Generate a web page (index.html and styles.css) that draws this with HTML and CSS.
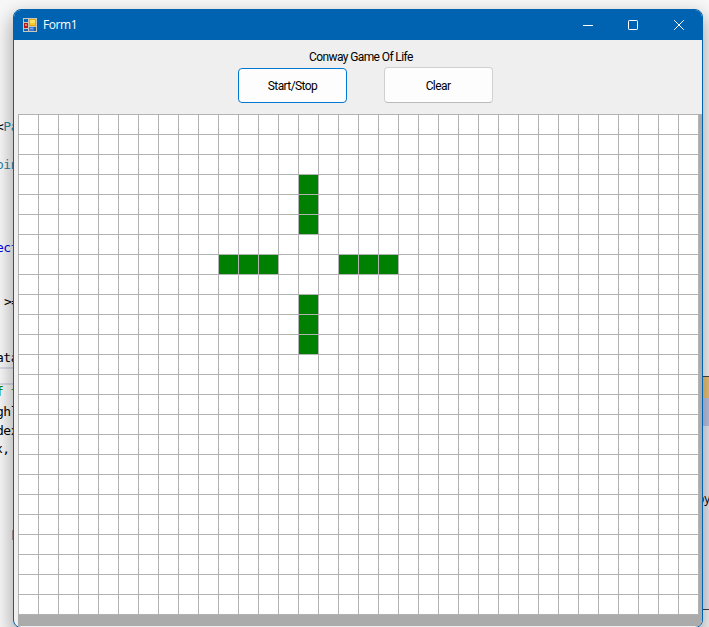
FILE: index.html
```html
<!DOCTYPE html>
<html lang="en">
<head>
<meta charset="utf-8">
<title>Form1</title>
<link rel="stylesheet" href="styles.css">
</head>
<body>
<div class="desktop">
  <div class="rule r1"></div>
  <div class="rule r2"></div>
  <div class="code c1">&lt;<span class="type">Pa</span></div>
  <div class="code c2 type">oin</div>
  <div class="code c3 keyword">ect</div>
  <div class="code c4">&gt;=</div>
  <div class="code c5">ata</div>
  <div class="code c6 comment">f t</div>
  <div class="code c7">ghl</div>
  <div class="code c8">dex</div>
  <div class="code c9">x,</div>
  <div class="bracket"></div>
  <div class="side-panel"><div class="side-gold"></div><div class="side-blue"></div><span class="side-text">by</span></div>

  <main class="window">
    <header class="titlebar">
      <svg class="app-icon" width="14" height="14" viewBox="0 0 14 14" shape-rendering="crispEdges">
        <path fill="#c9c6bd" d="M0 0h14v14H0z"/>
        <path fill="#1262ad" d="M1 1h4v3H1zM1 11h4v2H1zM11 9h2v4h-2z"/>
        <path fill="#b31b1b" d="M1 5h4v5H1z"/>
        <path fill="#ee7766" d="M2 6h2v2H2z"/>
        <path fill="#e3a90c" d="M6 1h7v7H6z"/>
        <path fill="#ffe35c" d="M7 2h5v3H7z"/>
        <path fill="#f8c92c" d="M7 5h5v2H7z"/>
        <path fill="#3c78db" d="M6 9h5v4H6z"/>
        <path fill="#86adf5" d="M7 10h3v1H7z"/>
      </svg>
      <h1 class="title">Form1</h1>
      <div class="controls">
        <svg width="12" height="12" viewBox="0 0 12 12"><path d="M2 6.5h10"/></svg>
        <svg width="12" height="12" viewBox="0 0 12 12"><rect x="1.5" y="1.5" width="9" height="9" rx=".7"/></svg>
        <svg width="12" height="12" viewBox="0 0 12 12"><path d="M1.2 1.2l9.6 9.6M10.8 1.2l-9.6 9.6"/></svg>
      </div>
    </header>
    <section class="form">
      <p class="label">Conway Game Of Life</p>
      <div class="buttons">
        <button class="btn focused"><span>Start/Stop</span></button>
        <button class="btn clear"><span>Clear</span></button>
      </div>
      <div class="board">
        <div class="cells">
          <i class="top"></i>
          <i class="left"></i>
          <i class="right"></i>
          <i class="bottom"></i>
        </div>
      </div>
    </section>
  </main>
</div>
</body>
</html>
```
FILE: styles.css
```css
* { box-sizing: border-box; }
body { margin: 0; overflow: hidden; font-family: "Open Sans", "Noto Sans", sans-serif; }
.desktop { position: relative; width: 709px; height: 627px; overflow: hidden; background: #f7f7f7; }

/* Editor behind the form */
.code { position: absolute; left: -4px; font: 13px/18px "DejaVu Sans Mono", monospace; letter-spacing: -.5px; white-space: pre; color: #000; }
.type { color: #2b83a3; }
.keyword { color: #0000e0; }
.comment { color: #008000; }
.c1 { top: 118px; }
.c2 { top: 156px; }
.c3 { top: 239px; }
.c4 { top: 293px; left: 4px; }
.c5 { top: 349px; }
.c6 { top: 383px; }
.c7 { top: 403px; }
.c8 { top: 422px; }
.c9 { top: 440px; left: -5px; }
.rule { position: absolute; left: 0; width: 14px; height: 2px; background: #d9dae5; }
.r1 { top: 367px; }
.r2 { top: 383px; }
.bracket { position: absolute; left: 12px; top: 530px; width: 2px; height: 10px; background: #b9a0a0; }
.side-panel { position: absolute; left: 700px; top: 376px; width: 9px; height: 234px; background: #e9eaf3; border-top: 1px solid #444; border-bottom: 1px solid #444; }
.side-gold { height: 21px; background: #eec477; }
.side-blue { height: 28px; background: #bcc5e4; }
.side-text { position: absolute; left: -3px; top: 113px; font-size: 12px; line-height: 18px; }

/* Form window */
.window { position: absolute; left: 13px; top: 9px; width: 690px; height: 619px; overflow: hidden; border: 1px solid #0063b1; border-radius: 8px; background: #efefef; box-shadow: 0 8px 18px 2px rgba(0,0,0,.32); }
.titlebar { display: flex; align-items: center; height: 30px; padding: 0 16px 0 9px; background: #0063b1; color: #fff; }
.title { flex: 1; margin: 0 0 0 6px; font-size: 12px; font-weight: 400; line-height: 18px; letter-spacing: -.4px; }
.controls { display: flex; gap: 34px; margin-right: 1px; }
.controls svg { display: block; fill: none; stroke: #fff; stroke-width: 1; }
.form { display: flex; flex-direction: column; height: 587px; padding: 9px 0 1px 4px; }
.label, .btn { font: 12px/16px Roboto, sans-serif; letter-spacing: -.6px; color: #000; }
.label { width: 104px; height: 16px; margin: 0 0 0 291px; white-space: nowrap; }
.buttons { display: flex; gap: 37px; height: 36px; margin: 2px 0 11px 220px; }
.btn { width: 109px; height: 36px; padding: 0; border: 1px solid #d0d0d0; border-bottom-color: #bbb; border-radius: 4px; background: #fdfdfd; }
.btn.focused { height: 35px; margin-top: 1px; padding-top: 1px; border-color: #0078d4; }
.btn.clear { padding: 1px 1px 0 0; }
.board { flex: none; height: 512px; background: #ababab; }
.cells {
  display: grid;
  grid-template-columns: repeat(34, 20px);
  grid-template-rows: repeat(25, 20px);
  width: 681px;
  height: 501px;
  background-color: #fff;
  background-image: linear-gradient(#b2b2b2 1px, transparent 1px), linear-gradient(90deg, #b2b2b2 1px, transparent 1px);
  background-size: 20px 20px;
}
.cells i {
  margin: 1px 0 0 1px;
  background-color: #008000;
  background-image: linear-gradient(transparent 19px, #b2b2b2 19px), linear-gradient(90deg, transparent 19px, #b2b2b2 19px);
  background-size: 20px 20px;
}
.top { grid-area: 4 / 15 / 7 / 16; }
.left { grid-area: 8 / 11 / 9 / 14; }
.right { grid-area: 8 / 17 / 9 / 20; }
.bottom { grid-area: 10 / 15 / 13 / 16; }
```
